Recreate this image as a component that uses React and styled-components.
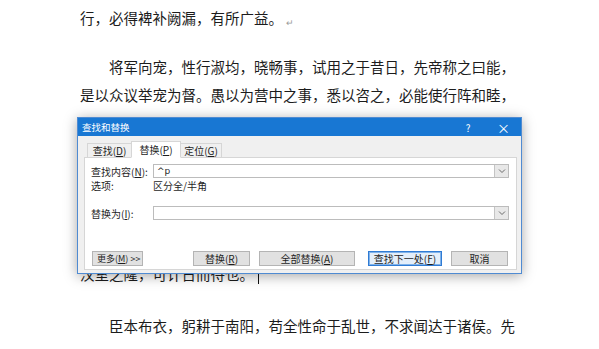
import React from "react";
import styled, { createGlobalStyle } from "styled-components";

const Global = createGlobalStyle`
  body {
    margin: 0;
    background: #ffffff;
  }
`;

const Page = styled.div`
  position: relative;
  width: 599px;
  height: 349px;
  overflow: hidden;
  background: #ffffff;
  font-family: "Noto Sans CJK SC", "Noto Sans", sans-serif;
`;

const Doc = styled.div`
  padding: 4px 0 0 80px;
  color: #1c1c1c;
`;

const Para = styled.div`
  margin-bottom: ${(p) => p.gap || 0}px;
`;

const Line = styled.div`
  height: 28px;
  line-height: 28px;
  font-size: 14.5px;
  white-space: nowrap;
  padding-left: ${(p) => (p.indent ? 29 : 0)}px;
`;

// lines that sit fully behind the dialog
const Hidden = styled.div`
  height: ${(p) => p.lines * 28}px;
`;

const Mark = styled.span`
  font-size: 9px;
  color: #9a9a9a;
  margin-left: 3px;
  vertical-align: -2px;
`;

const Caret = styled.span`
  display: inline-block;
  width: 1px;
  height: 17px;
  background: #111;
  margin-left: 4px;
  vertical-align: -4px;
`;

// dialog
const Dialog = styled.div`
  position: absolute;
  left: 77px;
  top: 117px;
  width: 445px;
  height: 157px;
  box-sizing: border-box;
  border: 1px solid #4f8bd2;
  background: #f0f0f0;
  box-shadow: 0 2px 12px rgba(0, 0, 0, 0.35);
  display: flex;
  flex-direction: column;
  font-size: 11px;
  color: #1e1e1e;
`;

const TitleBar = styled.div`
  height: 18px;
  background: #1877d3;
  color: #ffffff;
  display: flex;
  align-items: center;
  padding: 0 0 0 4px;
`;

const Title = styled.span`
  flex: 1;
  font-size: 9.5px;
`;

const TitleBtn = styled.span`
  width: ${(p) => p.w}px;
  text-align: center;
  font-size: ${(p) => p.size || 11}px;
`;

const Body = styled.div`
  flex: 1;
  display: flex;
  flex-direction: column;
  padding: 5px 4px 3px 6px;
`;

const TabStrip = styled.div`
  height: 17px;
  display: flex;
  align-items: flex-end;
  padding-left: 3px;
  margin-bottom: -1px;
  position: relative;
  z-index: 1;
`;

const Tab = styled.div`
  width: ${(p) => p.w}px;
  height: ${(p) => (p.active ? 17 : 15)}px;
  box-sizing: border-box;
  border: 1px solid #d6d6d6;
  border-bottom: ${(p) => (p.active ? "1px solid #ffffff" : "1px solid #d6d6d6")};
  background: ${(p) => (p.active ? "#ffffff" : "#f0f0f0")};
  display: flex;
  align-items: center;
  justify-content: center;
  font-size: 10px;
  white-space: nowrap;
  margin-left: ${(p) => (p.active ? -1 : 0)}px;
  margin-right: ${(p) => (p.active ? -1 : 0)}px;
  position: relative;
  z-index: ${(p) => (p.active ? 2 : 1)};
`;

const Panel = styled.div`
  flex: 1;
  background: #ffffff;
  border: 1px solid #d6d6d6;
  padding: 6px 7px 0 6px;
  display: flex;
  flex-direction: column;
`;

const Row = styled.div`
  display: flex;
  align-items: center;
  height: 14px;
  margin-top: ${(p) => p.mt || 0}px;
`;

const Label = styled.span`
  width: 62px;
  flex-shrink: 0;
  font-size: 10px;
  white-space: nowrap;
`;

const Field = styled.div`
  flex: 1;
  height: 14px;
  box-sizing: border-box;
  border: 1px solid #bcbcbc;
  background: #ffffff;
  display: flex;
  align-items: center;
`;

const FieldText = styled.span`
  flex: 1;
  padding-left: 3px;
  font-size: 9px;
  font-family: "DejaVu Sans", sans-serif;
  line-height: 12px;
`;

const Drop = styled.div`
  width: 13px;
  height: 12px;
  border-left: 1px solid #c4c4c4;
  background: #e8e8e8;
  display: flex;
  align-items: center;
  justify-content: center;
`;

const Value = styled.span`
  font-size: 10px;
`;

const ButtonRow = styled.div`
  display: flex;
  align-items: center;
  margin-top: 31px;
  padding-left: 1px;
  padding-right: 1px;
`;

const Spacer = styled.div`
  flex: 1;
`;

const Button = styled.div`
  width: ${(p) => p.w}px;
  height: 15px;
  box-sizing: border-box;
  margin-left: ${(p) => p.ml || 0}px;
  border: 1px solid ${(p) => (p.primary ? "#2f7bd4" : "#b4b4b4")};
  box-shadow: ${(p) => (p.primary ? "inset 0 0 0 1px #7fb2ea" : "none")};
  background: ${(p) => (p.primary ? "#e3eefa" : "#e1e1e1")};
  display: flex;
  align-items: center;
  justify-content: ${(p) => (p.left ? "flex-start" : "center")};
  padding-left: ${(p) => (p.left ? 4 : 0)}px;
  font-size: ${(p) => (p.left ? 9 : 10)}px;
  white-space: nowrap;
  overflow: hidden;
`;

const Chevron = () => (
  <svg width="8" height="6" viewBox="0 0 8 6">
    <polyline points="1,1.5 4,4.5 7,1.5" fill="none" stroke="#6b6b6b" strokeWidth="1" />
  </svg>
);

const App = () => {
  return (
    <Page>
      <Global />
      <Doc>
        <Para gap={21}>
          <Line>
            行，必得裨补阙漏，有所广益。<Mark>↵</Mark>
          </Line>
        </Para>
        <Para gap={11}>
          <Line indent>将军向宠，性行淑均，晓畅事，试用之于昔日，先帝称之曰能，</Line>
          <Line>是以众议举宠为督。愚以为营中之事，悉以咨之，必能使行阵和睦，</Line>
          <Hidden lines={1} />
        </Para>
        <Para gap={24}>
          <Hidden lines={4} />
          <Line>
            汉室之隆，可计日而待也。<Caret />
          </Line>
        </Para>
        <Para>
          <Line indent>臣本布衣，躬耕于南阳，苟全性命于乱世，不求闻达于诸侯。先</Line>
        </Para>
      </Doc>

      <Dialog>
        <TitleBar>
          <Title>查找和替换</Title>
          <TitleBtn w={58} size={10}>?</TitleBtn>
          <TitleBtn w={12} size={13}>×</TitleBtn>
          <TitleBtn w={12} />
        </TitleBar>
        <Body>
          <TabStrip>
            <Tab w={45}>
              查找(<u>D</u>)
            </Tab>
            <Tab w={50} active>
              替换(<u>P</u>)
            </Tab>
            <Tab w={42}>
              定位(<u>G</u>)
            </Tab>
          </TabStrip>
          <Panel>
            <Row>
              <Label>
                查找内容(<u>N</u>):
              </Label>
              <Field>
                <FieldText>^p</FieldText>
                <Drop>
                  <Chevron />
                </Drop>
              </Field>
            </Row>
            <Row>
              <Label>选项:</Label>
              <Value>区分全/半角</Value>
            </Row>
            <Row mt={14}>
              <Label>
                替换为(<u>I</u>):
              </Label>
              <Field>
                <FieldText />
                <Drop>
                  <Chevron />
                </Drop>
              </Field>
            </Row>
            <ButtonRow>
              <Button w={51} left>
                更多(<u>M</u>) &gt;&gt;
              </Button>
              <Spacer />
              <Button w={57}>
                替换(<u>R</u>)
              </Button>
              <Button w={96} ml={9}>
                全部替换(<u>A</u>)
              </Button>
              <Button w={74} ml={13} primary>
                查找下一处(<u>F</u>)
              </Button>
              <Button w={57} ml={9}>
                取消
              </Button>
            </ButtonRow>
          </Panel>
        </Body>
      </Dialog>
    </Page>
  );
};

export default App;
